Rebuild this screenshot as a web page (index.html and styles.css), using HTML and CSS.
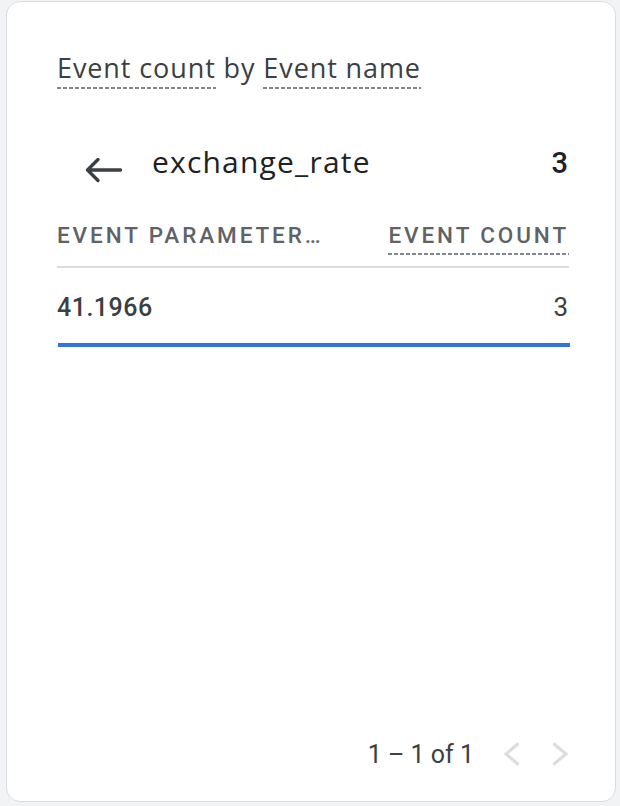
FILE: index.html
```html
<!DOCTYPE html>
<html>
<head>
<meta charset="utf-8">
<link rel="stylesheet" href="styles.css">
</head>
<body>
<div class="card">
  <h1 class="title"><span class="dash">Event count</span> by <span class="dash">Event name</span></h1>
  <div class="drill">
    <span class="back">
      <svg width="40" height="28" viewBox="0 0 40 28"><path d="M4 14H36.5M14 3.5L3.5 14L14 24.5" fill="none" stroke="#3c4043" stroke-width="3.4" stroke-linecap="round" stroke-linejoin="round"/></svg>
    </span>
    <span class="drill-name">exchange_rate</span>
    <span class="drill-val">3</span>
  </div>
  <div class="thead">
    <span class="th">EVENT PARAMETER…</span>
    <span class="th th-dash">EVENT COUNT</span>
  </div>
  <div class="row">
    <span class="cell-name">41.1966</span>
    <span class="cell-val">3</span>
  </div>
  <div class="bar"><div class="bar-fill" style="width:100%"></div></div>
  <div class="spacer"></div>
  <div class="pager">
    <span class="range">1 – 1 of 1</span>
    <svg class="chev" width="20" height="26" viewBox="0 0 20 26"><path d="M16.5 2.5L4 13L16.5 23.5" fill="none" stroke="#dadce0" stroke-width="3"/></svg>
    <svg class="chev" width="20" height="26" viewBox="0 0 20 26"><path d="M3.5 2.5L16 13L3.5 23.5" fill="none" stroke="#dadce0" stroke-width="3"/></svg>
  </div>
</div>
</body>
</html>
```
FILE: styles.css
```css
html, body {
  margin: 0;
  padding: 0;
  background: #f1f3f4;
}
body {
  width: 620px;
  height: 806px;
  font-family: Roboto, "Liberation Sans", sans-serif;
}
.card {
  box-sizing: border-box;
  margin: 1px 0 0 6px;
  width: 610px;
  height: 801px;
  background: #fff;
  border: 1px solid #dadce0;
  border-radius: 14px;
  padding: 0 47px 0 50px;
  display: flex;
  flex-direction: column;
}
.title {
  margin: 49px 0 0 0;
  font-size: 27px;
  font-weight: 400;
  color: #3c4043;
  line-height: 34px;
  height: 34px;
  font-family: "Open Sans", Roboto, sans-serif;
  letter-spacing: 0.9px;
  white-space: nowrap;
}
.dash {
  padding-bottom: 2.5px;
  background: linear-gradient(to right, #80868b 4px, transparent 4px) repeat-x left bottom / 6px 2px;
}
.drill {
  display: flex;
  align-items: center;
  margin-top: 65px;
  height: 40px;
}
.back {
  display: flex;
  width: 95px;
  padding-left: 27px;
  box-sizing: border-box;
  flex-shrink: 0;
}
.drill-name {
  flex: 1;
  font-size: 30px;
  color: #202124;
  font-family: "Open Sans", Roboto, sans-serif;
  letter-spacing: 1.2px;
  margin-bottom: 17px;
}
.drill-val {
  font-size: 29px;
  color: #202124;
  font-weight: 500;
  margin-bottom: 14px;
}
.thead {
  display: flex;
  justify-content: space-between;
  align-items: flex-start;
  margin-top: 32px;
  margin-right: -1px;
  height: 46px;
  box-sizing: border-box;
  border-bottom: 2px solid #dadce0;
}
.th {
  font-size: 22.5px;
  font-weight: 500;
  color: #5f6368;
  letter-spacing: 2.9px;
  line-height: 26px;
  white-space: nowrap;
}
.th-dash {
  margin-right: 0;
  padding-bottom: 7px;
  background: linear-gradient(to right, #80868b 4px, transparent 4px) repeat-x left bottom / 6px 2px;
}
.row {
  display: flex;
  justify-content: space-between;
  align-items: center;
  box-sizing: border-box;
  height: 72px;
  padding-top: 6px;
  color: #3c4043;
}
.cell-name {
  font-size: 25px;
  font-weight: 500;
  letter-spacing: 0.5px;
}
.cell-val {
  font-size: 26px;
  font-weight: 400;
  margin-right: 0;
}
.bar {
  height: 4px;
  margin: 3px -2px 0 1px;
}
.bar-fill {
  height: 100%;
  background: #3174de;
}
.spacer {
  flex: 1;
}
.pager {
  display: flex;
  justify-content: flex-end;
  align-items: center;
  gap: 28px;
  margin: 0 -2px 32px 0;
  height: 30px;
}
.range {
  font-size: 25px;
  color: #3c4043;
  letter-spacing: 0;
}
.chev {
  display: block;
}
```
